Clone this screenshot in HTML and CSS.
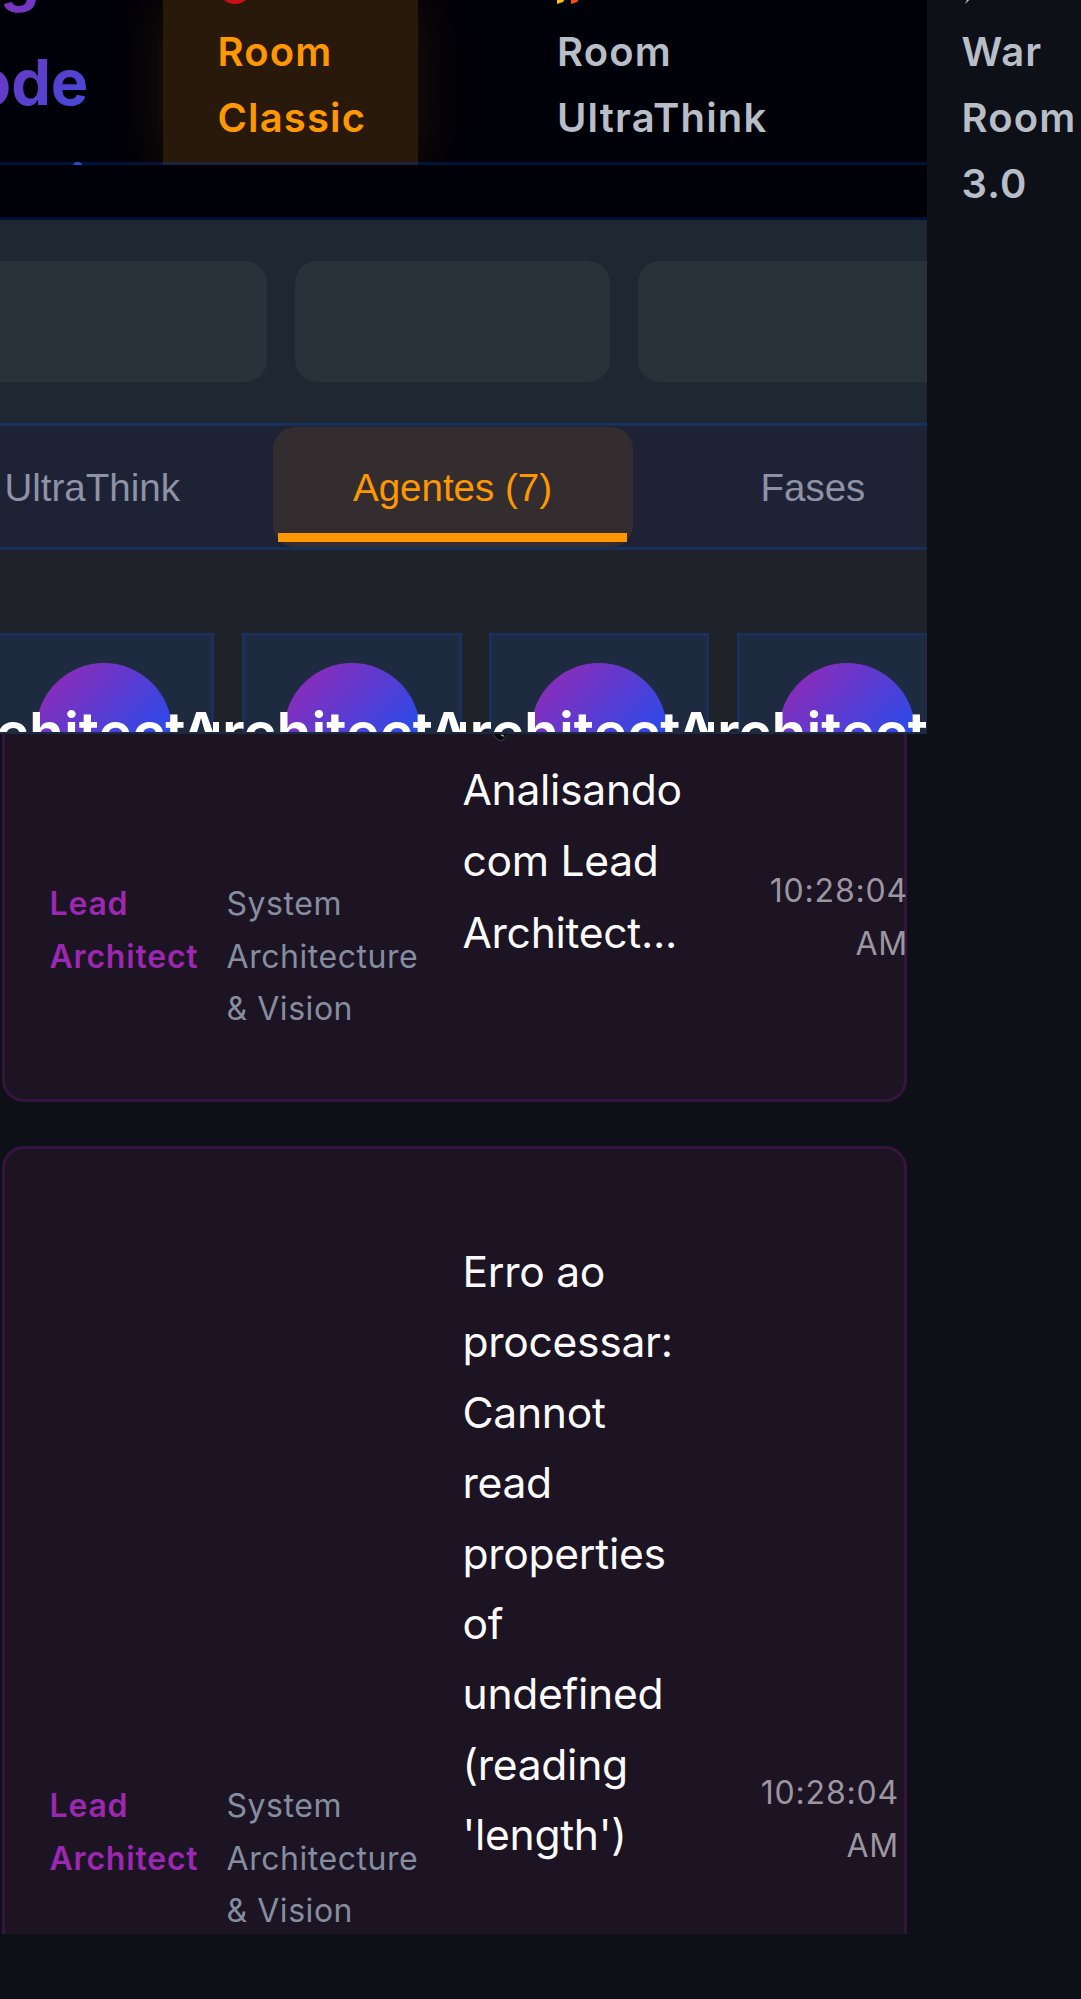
FILE: index.html
```html
<!DOCTYPE html>
<html lang="pt">
<head>
<meta charset="utf-8">
<title>War Room</title>
<link rel="stylesheet" href="styles.css">
</head>
<body>
<header class="topbar">
  <div class="brand"><span class="brand-1">gents</span><span class="brand-2">ode</span><span class="brand-3">i</span></div>
  <div class="nav-clip">
    <a class="nav-item active"><span class="first"><svg class="emoji" viewBox="0 0 40 40"><circle cx="22" cy="20" r="17" fill="#c9101a"/></svg>War</span><span>Room</span><span>Classic</span></a>
    <a class="nav-item"><span class="first"><svg class="emoji rocket" viewBox="0 0 40 40"><path d="M0 40V30L14 26 6 38Z" fill="#ffc400"/><path d="M14 40V28L26 30 20 38Z" fill="#ff4a12"/></svg>War</span><span>Room</span><span>UltraThink</span></a>
  </div>
  <a class="nav-item outside"><span class="first"><svg class="emoji bolt" viewBox="0 0 40 40"><path d="M3 40 12 22H22Z" fill="#c9c9c4"/></svg></span><span>War</span><span>Room</span><span>3.0</span></a>
</header>
<div class="subbar"></div>
<section class="stats"><div class="stat"></div><div class="stat"></div><div class="stat"></div></section>
<nav class="tabs">
  <a class="tab tab-ultra">UltraThink</a>
  <a class="tab tab-active">Agentes (7)</a>
  <a class="tab tab-fases">Fases</a>
</nav>
<section class="agents">
  <div class="agent"><div class="avatar"></div><b>Architect</b></div>
  <div class="agent"><div class="avatar"></div><b>Architect</b></div>
  <div class="agent"><div class="avatar"></div><b>Architect</b></div>
  <div class="agent"><div class="avatar"></div><b>Architect</b></div>
</section>
<main class="log">
  <article class="entry entry-first">
    <div class="name">Lead<br>Architect</div>
    <div class="role">System<br>Architecture<br>&amp; Vision</div>
    <div class="message"><svg class="tool" viewBox="0 0 16 8"><path d="M0 0H16L11 6Q8 9 5 5Z" fill="#050707"/><path d="M1 0 6 6Q8 8 11 6L15 1" fill="none" stroke="#45454a"/><path d="M9 1 12 2" stroke="#999" stroke-width="1.5"/></svg>Analisando<br>com Lead<br>Architect...</div>
    <time>10:28:04<br>AM</time>
  </article>
  <article class="entry entry-error">
    <div class="name">Lead<br>Architect</div>
    <div class="role">System<br>Architecture<br>&amp; Vision</div>
    <div class="message">Erro ao<br>processar:<br>Cannot<br>read<br>properties<br>of<br>undefined<br>(reading<br>'length')</div>
    <time>10:28:04<br>AM</time>
  </article>
</main>
</body>
</html>
```
FILE: styles.css
```css
* { box-sizing: border-box; }
body {
  margin: 0;
  width: 1081px;
  height: 1999px;
  overflow: hidden;
  background: #0d1017;
  font-family: Inter, "Liberation Sans", sans-serif;
}
.topbar {
  position: relative;
  display: flex;
  height: 165px;
  background: linear-gradient(#000008, #000008) 0 0 / 927px 100% no-repeat;
}
.topbar::after {
  content: "";
  position: absolute;
  left: 0;
  bottom: 0;
  width: 927px;
  height: 3px;
  background: rgba(0, 60, 180, .28);
}
.brand {
  width: 108px;
  height: 165px;
  flex: none;
  overflow: hidden;
  font-size: 63px;
  font-weight: 700;
  line-height: 105.6px;
  color: transparent;
  background: linear-gradient(135deg, #8a2fb8 -20%, #5a3fcc 45%, #2c55e6 100%);
  -webkit-background-clip: text;
  background-clip: text;
}
.brand span { display: block; white-space: nowrap; }
.brand-1 { margin-top: -76px; padding-left: 0; }
.brand-2 { margin-left: -27.5px; }
.brand-3 { margin-left: 69px; }
.nav-clip {
  display: flex;
  width: 819px;
  height: 165px;
  overflow: hidden;
}
.nav-item {
  flex: none;
  height: 165px;
  font-size: 40px;
  font-weight: 600;
  letter-spacing: 1.15px;
  line-height: 66px;
  color: #b8bec7;
}
.nav-item span { display: block; white-space: nowrap; }
.nav-item .first { display: flex; height: 66px; margin-top: -47.2px; }
.nav-clip .nav-item { padding-left: 55px; }
.nav-item.active {
  width: 255.5px;
  margin-left: 54.5px;
  margin-right: 84px;
  color: #ff9800;
  background: #28190a;
  box-shadow: 0 0 55px rgba(255, 152, 0, .13);
}
.nav-item.outside { margin-left: 34.5px; }
.emoji { width: 40px; height: 40px; margin: 14px 10px 0 -5px; flex: none; }
.emoji.rocket, .emoji.bolt { margin-left: 0; margin-top: 11.5px; }
.subbar {
  width: 927px;
  height: 55px;
  background: #000008;
  border-bottom: 3px solid #00103a;
}
.stats {
  display: flex;
  gap: 28px;
  width: 927px;
  height: 206px;
  padding: 41px 0 41.5px;
  overflow: hidden;
  background: #1e2732;
  border-bottom: 3px solid #1a305c;
}
.stat { flex: 0 0 315.5px; border-radius: 22px; background: #29323b; }
.stat:first-child { margin-left: -49px; }
.tabs {
  display: flex;
  width: 927px;
  height: 124px;
  background: #1e2235;
  border-bottom: 3px solid #1a2e5e;
  font: 38.5px/123px "Liberation Sans", Arial, sans-serif;
  color: #8e92a5;
}
.tab { flex: none; white-space: nowrap; }
.tab-ultra { width: 272.5px; padding-left: 4.5px; }
.tab-active {
  position: relative;
  width: 360px;
  height: 120px;
  margin-top: 1px;
  line-height: 121px;
  text-align: center;
  color: #ff9800;
  background: #342d2f;
  border-radius: 22px;
}
.tab-active::after {
  content: "";
  position: absolute;
  left: 5.5px;
  right: 5.5px;
  bottom: 5px;
  height: 9px;
  background: #ff9800;
}
.tab-fases { padding-left: 128px; }
.agents {
  display: flex;
  gap: 27.5px;
  width: 927px;
  height: 184px;
  padding-top: 82.5px;
  overflow: hidden;
  background: #1f2329;
  border-bottom: 2px solid #1c2b42;
}
.agent {
  position: relative;
  flex: 0 0 220px;
  height: 240px;
  padding-top: 27px;
  border: 3px solid #18305b;
  background: #1e2a40;
}
.agent:first-child { margin-left: -6px; }
.avatar {
  width: 136px;
  height: 136px;
  margin: 0 auto;
  border-radius: 50%;
  background: linear-gradient(135deg, #9c27b0, #0057ff);
}
/* names are wider than their cards and run into the next one */
.agent b {
  position: absolute;
  left: -64px;
  top: 52px;
  font-size: 57px;
  font-weight: 600;
  line-height: 90px;
  color: #fff;
}
.agent::after {
  content: "";
  position: absolute;
  left: -32px;
  top: 86px;
  width: 6px;
  height: 20px;
  background: #fff;
}
.log { height: 1200px; overflow: hidden; }
.entry {
  display: grid;
  grid-template-columns: 177px 235px 1fr auto;
  width: 905px;
  margin-left: 2px;
  padding-left: 44.5px;
  border: 3px solid #35153f;
  border-radius: 22px;
  background: #1c1323;
  font-size: 32px;
  line-height: 52.6px;
}
.entry-first { height: 368px; border-top: 0; border-radius: 0 0 22px 22px; }
.entry-error { height: 860px; margin-top: 44px; }
.name { padding-top: 144px; font-weight: 600; letter-spacing: .8px; color: #9c27b0; }
.role { padding-top: 144px; letter-spacing: .55px; color: #858da0; }
.message { position: relative; padding-top: 19.5px; padding-left: 1px; font-size: 42.6px; letter-spacing: -.3px; line-height: 71.5px; color: #fafafa; }
.tool { position: absolute; left: 30px; top: 0; width: 16px; height: 8px; }
.entry time { padding-top: 131px; text-align: right; letter-spacing: .8px; color: #9b969f; margin-right: -4px; }
.entry-error .name, .entry-error .role { padding-top: 631px; }
.entry-error .message { padding-top: 88px; line-height: 70.4px; }
.entry-error time { padding-top: 618px; margin-right: 5px; }
```
